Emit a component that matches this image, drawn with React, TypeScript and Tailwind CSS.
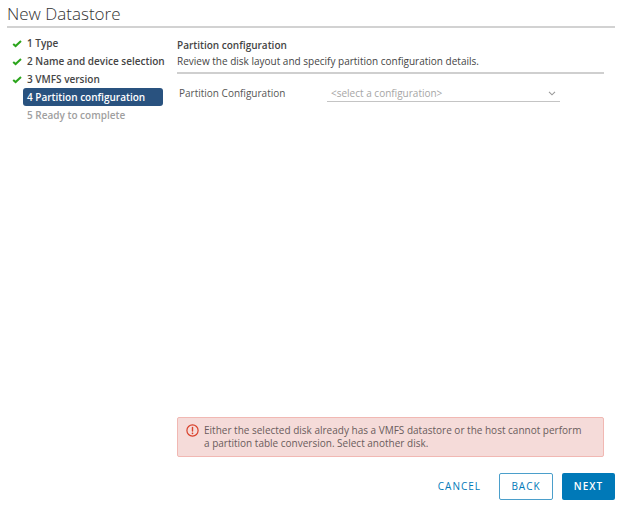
import React, { useState } from "react";

const steps = [
  { id: 1, label: "Type", status: "done" },
  { id: 2, label: "Name and device selection", status: "done" },
  { id: 3, label: "VMFS version", status: "done" },
  { id: 4, label: "Partition configuration", status: "active" },
  { id: 5, label: "Ready to complete", status: "pending" },
];

const rowStyles: { [key: string]: string } = {
  done: "text-[#454545]",
  active: "text-white bg-[#29527f]",
  pending: "text-[#a0a0a0]",
};

function CheckMark() {
  return (
    <svg viewBox="0 0 10 9" className="h-[9px] w-[10px]" fill="none" aria-hidden="true">
      <path d="M1.2 4.9 3.6 7.1 9 2" stroke="#2ba51c" strokeWidth="2" />
    </svg>
  );
}

function ErrorIcon() {
  return (
    <svg viewBox="0 0 13 13" className="h-[13px] w-[13px] shrink-0" fill="none" aria-hidden="true">
      <circle cx="6.5" cy="6.5" r="5.6" stroke="#d9412b" strokeWidth="1.2" />
      <path d="M6.5 3.4v3.6" stroke="#d9412b" strokeWidth="1.4" strokeLinecap="round" />
      <circle cx="6.5" cy="9.3" r="0.85" fill="#d9412b" />
    </svg>
  );
}

export default function App() {
  const [config, setConfig] = useState("");

  return (
    <div className="flex min-h-screen flex-col bg-white pt-1 pr-1.5 pb-[9px] pl-[7px] font-['Open_Sans',sans-serif] text-[10px] text-[#565656]">
      <header className="border-b-2 border-[#d2d2d2]">
        <h1 className="h-[22px] text-[17px] leading-5 font-light text-[#333]">New Datastore</h1>
      </header>

      <div className="flex flex-1 pt-1.5">
        <nav aria-label="Wizard steps" className="w-[156px] shrink-0">
          <ol>
            {steps.map((step) => (
              <li key={step.id} className="flex items-center">
                <span className="flex w-4 shrink-0 pl-[5px]">
                  {step.status === "done" && <CheckMark />}
                </span>
                <button
                  type="button"
                  disabled={step.status === "pending"}
                  aria-current={step.status === "active" ? "step" : undefined}
                  className={`h-[18px] flex-1 rounded-[3px] pl-1 text-left font-semibold whitespace-nowrap ${rowStyles[step.status]}`}
                >
                  {step.id} {step.label}
                </button>
              </li>
            ))}
          </ol>
        </nav>

        <main className="ml-3.5 mr-[11px] flex flex-1 flex-col">
          <div className="border-b-2 border-[#cfcfcf] pt-[3px] pb-[3px] text-[#454545]">
            <h2 className="leading-4 font-semibold">Partition configuration</h2>
            <p className="leading-4">
              Review the disk layout and specify partition configuration details.
            </p>
          </div>

          <div className="flex items-center pt-2.5 pl-0.5">
            <label htmlFor="config" className="w-[148px] shrink-0">
              Partition Configuration
            </label>
            <div className="relative w-[233px]">
              <select
                id="config"
                value={config}
                onChange={(e) => setConfig(e.target.value)}
                className="block h-[18px] w-full appearance-none border-b border-[#c4c4c4] bg-white pt-0.5 pl-1 text-[#a6a6a6] outline-none"
              >
                <option value="">&lt;select a configuration&gt;</option>
              </select>
              <svg
                viewBox="0 0 8 5"
                className="pointer-events-none absolute top-[7px] right-1 h-[5px] w-2"
                fill="none"
                aria-hidden="true"
              >
                <path d="M1 0.8 4 3.8 7 0.8" stroke="#999" strokeWidth="1.1" />
              </svg>
            </div>
          </div>

          <div
            role="alert"
            className="mt-auto flex gap-[5px] rounded-[2px] border border-[#f1b8b3] bg-[#f5dbd9] py-1.5 pr-4 pl-2 leading-[13px]"
          >
            <ErrorIcon />
            <p className="text-[#6a5c5c]">
              Either the selected disk already has a VMFS datastore or the host cannot perform
              <br />a partition table conversion. Select another disk.
            </p>
          </div>
        </main>
      </div>

      <footer className="flex justify-end pt-4 font-medium">
        <button type="button" className="mr-2 h-[27px] px-2.5 tracking-widest text-[#0079b8]">
          CANCEL
        </button>
        <button
          type="button"
          className="mr-[9px] h-[27px] w-[54px] rounded-[2px] border border-[#4b9fcb] tracking-widest text-[#0079b8]"
        >
          BACK
        </button>
        <button
          type="button"
          className="h-[27px] w-[53px] rounded-[2px] bg-[#0079b8] font-semibold tracking-widest text-white"
        >
          NEXT
        </button>
      </footer>
    </div>
  );
}
